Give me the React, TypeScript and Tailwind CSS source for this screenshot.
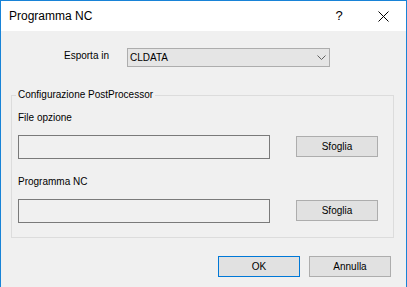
import React from 'react';

const Button = ({ label, primary }: { label: string; primary?: boolean }) => (
    <button
        className={`w-[82px] h-[21px] bg-[#e1e1e1] border text-[10px] leading-[12px] text-black flex items-center justify-center ${primary ? 'border-[#0078d7]' : 'border-[#adadad]'}`}
    >
        {label}
    </button>
);

const PathRow = ({ label, gapTop }: { label: string; gapTop: string }) => (
    <div className={gapTop}>
        <div className="h-[12px] text-[10px] leading-[12px]">{label}</div>
        <div className="flex items-start mt-[11px]">
            <div className="w-[252px] h-[24px] border border-[#7a7a7a] bg-[#f0f0f0]" />
            <div className="ml-[26px] mt-[1px]">
                <Button label="Sfoglia" />
            </div>
        </div>
    </div>
);

const App = () => {
    return (
        <div className="w-[407px] h-[287px] overflow-hidden border-x border-t border-[#1883d7] bg-[#f0f0f0] text-black font-['Liberation_Sans',Arial,sans-serif]">
            {/* title bar */}
            <div className="h-[30px] bg-white flex items-center">
                <div className="pl-[8px] text-[12px] leading-[14px]">Programma NC</div>
                <div className="ml-auto w-[46px] h-full flex items-center justify-center pl-[2px] text-[13px] leading-[14px]">?</div>
                <div className="w-[45px] h-full flex items-center justify-center">
                    <svg width="11" height="11" viewBox="0 0 11 11">
                        <path d="M0.5 0.5 L10.5 10.5 M10.5 0.5 L0.5 10.5" stroke="#000" strokeWidth="1" fill="none" />
                    </svg>
                </div>
            </div>

            {/* body */}
            <div className="flex flex-col">
                <div className="flex items-start mt-[17px]">
                    <div className="ml-[63px] w-[63px] mt-[1.5px] text-[10px] leading-[12px]">Esporta in</div>
                    <div className="w-[203px] h-[19px] border border-[#adadad] bg-[#e5e5e5] flex items-center pl-[2px]">
                        <span className="text-[10px] leading-[12px]">CLDATA</span>
                        <svg className="ml-auto mr-[3px]" width="9" height="5" viewBox="0 0 9 5">
                            <path d="M0.5 0.5 L4.5 4.5 L8.5 0.5" stroke="#606060" strokeWidth="1" fill="none" />
                        </svg>
                    </div>
                </div>

                <fieldset className="mt-[22px] ml-[10px] w-[383px] border border-[#dcdcdc]">
                    <legend className="ml-[4px] px-[2px] text-[10px] leading-[12px]">Configurazione PostProcessor</legend>
                    <div className="pl-[6px] pt-[11px] pb-[14px]">
                        <PathRow label="File opzione" gapTop="" />
                        <PathRow label="Programma NC" gapTop="mt-[17px]" />
                    </div>
                </fieldset>

                <div className="flex mt-[18px] ml-[217px] gap-[9px]">
                    <Button label="OK" primary />
                    <Button label="Annulla" />
                </div>
            </div>
        </div>
    );
};

export default App;
